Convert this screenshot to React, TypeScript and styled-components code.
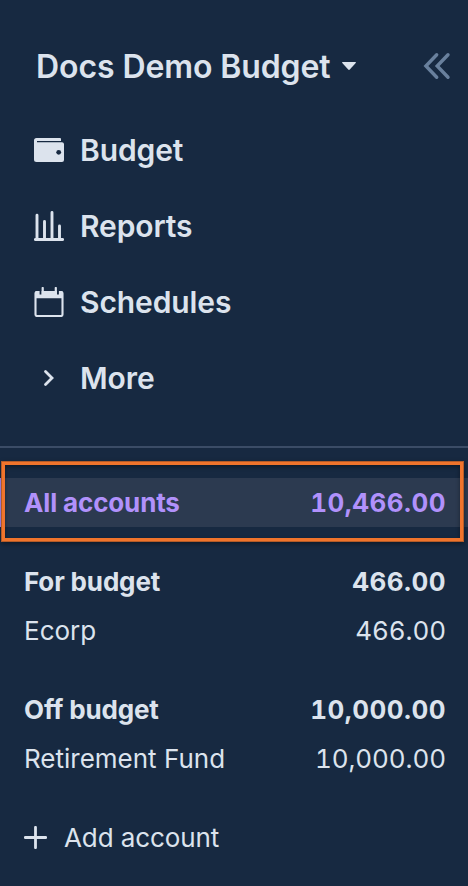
import React from "react";
import styled, { createGlobalStyle } from "styled-components";

const Global = createGlobalStyle`
  * { box-sizing: border-box; }
  body { margin: 0; background: #172941; }
`;

const Sidebar = styled.aside`
  position: relative;
  display: flex;
  flex-direction: column;
  width: 468px;
  height: 886px;
  overflow: hidden;
  background: #172941;
  color: #dce3ed;
  font-family: Inter, sans-serif;
  white-space: nowrap;
`;

const Header = styled.header`
  display: flex;
  align-items: center;
  height: 76px;
  margin-top: 28px;
  padding: 0 17px 0 36px;
`;

const Title = styled.h1`
  flex: none;
  margin: 0;
  padding-top: 2px;
  font-size: 32px;
  line-height: 40px;
  font-weight: 560;
  letter-spacing: -0.1px;
`;

const Caret = styled.svg`
  flex: none;
  margin: 0 auto 0 10px;
`;

const Nav = styled.nav`
  display: flex;
  flex-direction: column;
  height: 344px;
  padding-top: 8px;
  border-bottom: 2px solid #3b4c66;
`;

const NavItem = styled.a`
  display: flex;
  align-items: center;
  gap: 16px;
  height: 76px;
  padding-left: 34px;
  font-size: 30px;
  line-height: 36px;
  font-weight: 560;
  letter-spacing: -0.1px;

  svg { flex: none; }
`;

const Accounts = styled.section`
  position: relative;
  display: flex;
  flex-direction: column;
  gap: 30px;
  padding-top: 30px;
`;

const Group = styled.div`
  display: flex;
  flex-direction: column;
`;

const Row = styled.div<{ $bold?: boolean; $active?: boolean }>`
  display: flex;
  align-items: center;
  justify-content: space-between;
  height: 49px;
  padding: 0 22px 0 20px;
  border-left: 4px solid ${(p) => (p.$active ? "#b191fb" : "transparent")};
  background: ${(p) => (p.$active ? "#2c3a50" : "transparent")};
  color: ${(p) => (p.$active ? "#b191fb" : "inherit")};
  font-size: 26px;
  line-height: 32px;
  font-weight: ${(p) => (p.$bold ? 700 : 430)};
  letter-spacing: ${(p) => (p.$bold ? "-0.15px" : "0")};
`;

const Amount = styled.span<{ $bold?: boolean }>`
  font-variant-numeric: tabular-nums;
  letter-spacing: ${(p) => (p.$bold ? "0.45px" : "-0.1px")};
`;

const Highlight = styled.div`
  position: absolute;
  top: 13px;
  left: 1px;
  width: 463px;
  height: 81px;
  border: 4px solid #f0742c;
  outline: 1px solid rgba(70, 45, 35, 0.35);
  outline-offset: -1px;
  box-shadow: 0 2px 5px rgba(0, 0, 0, 0.4), inset 0 2px 4px rgba(0, 0, 0, 0.4);
  pointer-events: none;
`;

const AddAccount = styled.a`
  display: flex;
  align-items: center;
  gap: 17px;
  height: 40px;
  margin-top: 34px;
  padding-left: 24px;
  font-size: 26px;
  line-height: 32px;
  font-weight: 430;
  letter-spacing: -0.1px;
`;

const AddLabel = styled.span`
  padding-top: 2px;
`;

const WalletIcon = () => (
  <svg width="30" height="30" viewBox="0 0 30 30" fill="currentColor">
    <path d="M2.500 3H26a1 1 0 0 1 1 1v2H3v1.200h25A2 2 0 0 1 30 9v16a2 2 0 0 1-2 2H2.500A2.500 2.500 0 0 1 0 24.500V5.500A2.500 2.500 0 0 1 2.500 3Z" />
    <circle cx="24.700" cy="17.300" r="2.400" fill="#172941" />
  </svg>
);

const ReportsIcon = () => (
  <svg width="30" height="30" viewBox="0 0 30 30" fill="none" stroke="currentColor" strokeWidth="2.900" strokeLinecap="round">
    <path d="M1.400 28.500H28.600M3 4.300V28M10.500 10.500V28M18 1.500V28M25.500 15V28" />
  </svg>
);

const CalendarIcon = () => (
  <svg width="30" height="30" viewBox="0 0 30 30" fill="none" stroke="currentColor">
    <rect x="1.500" y="5" width="27" height="24" rx="1.500" strokeWidth="2.100" />
    <path d="M1 5.500Q1 4 2.500 4H27.500Q29 4 29 5.500V11.300H1Z" fill="currentColor" stroke="none" />
    <path d="M6.600 3V7.500M23.900 3V7.500" stroke="#172941" strokeWidth="2" />
    <path d="M8.700 1V7.500M21.800 1V7.500" strokeWidth="2.200" strokeLinecap="round" />
  </svg>
);

const MoreIcon = () => (
  <svg width="30" height="30" viewBox="0 0 30 30" fill="none" stroke="currentColor" strokeWidth="2.800" strokeLinecap="round">
    <path d="M11.500 8.500 18 15 11.500 21.500" />
  </svg>
);

const PlusIcon = () => (
  <svg width="23" height="23" viewBox="0 0 23 23" fill="none" stroke="currentColor" strokeWidth="2.800" strokeLinecap="round">
    <path d="M11.500 1.300V21.700M1.300 11.500H21.700" />
  </svg>
);

const NAV = [
  { label: "Budget", Icon: WalletIcon },
  { label: "Reports", Icon: ReportsIcon },
  { label: "Schedules", Icon: CalendarIcon },
  { label: "More", Icon: MoreIcon },
];

const GROUPS = [
  [{ name: "All accounts", amount: "10,466.00", bold: true, active: true }],
  [
    { name: "For budget", amount: "466.00", bold: true },
    { name: "Ecorp", amount: "466.00" },
  ],
  [
    { name: "Off budget", amount: "10,000.00", bold: true },
    { name: "Retirement Fund", amount: "10,000.00" },
  ],
] as { name: string; amount: string; bold?: boolean; active?: boolean }[][];

export default function App() {
  return (
    <>
      <Global />
      <Sidebar>
        <Header>
          <Title>Docs Demo Budget</Title>
          <Caret width="16" height="10" viewBox="0 0 16 10" fill="currentColor">
            <path d="M1.700 1H14.300Q15.500 1 14.700 2L8.800 8.500Q8 9.300 7.200 8.500L1.300 2Q.5 1 1.700 1Z" />
          </Caret>
          <svg width="28" height="28" viewBox="0 0 28 28" fill="none" stroke="#69809d" strokeWidth="3.400" strokeLinecap="round">
            <path d="M13.700 2.800 2.900 14 13.700 25.200M25 2.800 14.200 14 25 25.200" />
          </svg>
        </Header>
        <Nav>
          {NAV.map(({ label, Icon }) => (
            <NavItem key={label}>
              <Icon />
              {label}
            </NavItem>
          ))}
        </Nav>
        <Accounts>
          {GROUPS.map((rows) => (
            <Group key={rows[0].name}>
              {rows.map((r) => (
                <Row key={r.name} $bold={r.bold} $active={r.active}>
                  <span>{r.name}</span>
                  <Amount $bold={r.bold}>{r.amount}</Amount>
                </Row>
              ))}
            </Group>
          ))}
          <Highlight />
        </Accounts>
        <AddAccount>
          <PlusIcon />
          <AddLabel>Add account</AddLabel>
        </AddAccount>
      </Sidebar>
    </>
  );
}
